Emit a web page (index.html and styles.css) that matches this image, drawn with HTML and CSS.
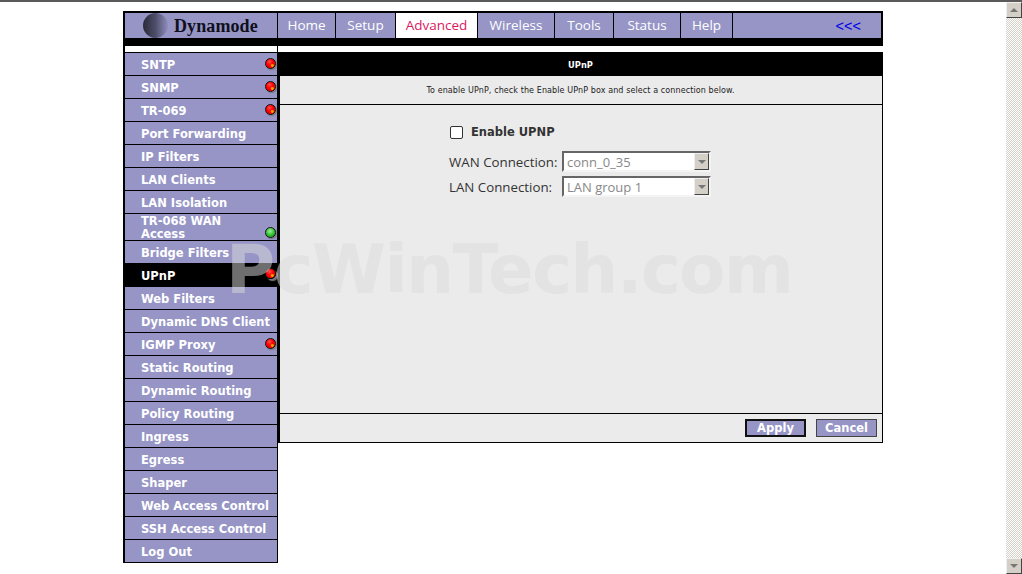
FILE: index.html
```html
<!DOCTYPE html>
<html lang="en">
<head>
<meta charset="utf-8">
<title>Dynamode - UPnP</title>
<link rel="stylesheet" href="styles.css">
</head>
<body>
<div class="screen">
  <div class="topline"></div>
  <div class="viewport">
    <div class="page">
      <div class="frame">
        <header class="head">
          <div class="brand">
            <svg class="globe" width="25" height="25" viewBox="0 0 25 25">
              <defs>
                <linearGradient id="g" x1="0" y1="0" x2="1" y2="0">
                  <stop offset="0" stop-color="#2a2a38"/>
                  <stop offset="0.5" stop-color="#4e4e6a"/>
                  <stop offset="1" stop-color="#8f8ebd"/>
                </linearGradient>
              </defs>
              <circle cx="12.5" cy="12.5" r="12.5" fill="url(#g)"/>
            </svg>
            <span class="brand-name">Dynamode</span>
          </div>
          <nav class="tabs">
            <a class="tab t-home">Home</a>
            <a class="tab t-setup">Setup</a>
            <a class="tab t-adv active">Advanced</a>
            <a class="tab t-wire">Wireless</a>
            <a class="tab t-tools">Tools</a>
            <a class="tab t-status">Status</a>
            <a class="tab t-help">Help</a>
            <div class="tab-rest"><a class="back">&lt;&lt;&lt;</a></div>
          </nav>
        </header>
        <div class="band"></div>
        <div class="body">
          <aside class="side">
            <div class="side-top"></div>
            <a class="item">SNTP<i class="dot red"></i></a>
            <a class="item">SNMP<i class="dot red"></i></a>
            <a class="item">TR-069<i class="dot red"></i></a>
            <a class="item">Port Forwarding</a>
            <a class="item">IP Filters</a>
            <a class="item">LAN Clients</a>
            <a class="item">LAN Isolation</a>
            <a class="item tall"><span class="wrap">TR-068 WAN<br>Access</span><i class="dot green low"></i></a>
            <a class="item">Bridge Filters</a>
            <a class="item current">UPnP<i class="dot red high"></i></a>
            <a class="item">Web Filters</a>
            <a class="item">Dynamic DNS Client</a>
            <a class="item">IGMP Proxy<i class="dot red"></i></a>
            <a class="item">Static Routing</a>
            <a class="item">Dynamic Routing</a>
            <a class="item">Policy Routing</a>
            <a class="item">Ingress</a>
            <a class="item">Egress</a>
            <a class="item">Shaper</a>
            <a class="item">Web Access Control</a>
            <a class="item">SSH Access Control</a>
            <a class="item">Log Out</a>
          </aside>
          <main class="content">
            <div class="whitebar"></div>
            <div class="panel">
              <h1 class="title">UPnP</h1>
              <p class="intro">To enable UPnP, check the Enable UPnP box and select a connection below.</p>
              <div class="form">
                <label class="enable"><span class="check"></span>Enable UPNP</label>
                <div class="field">
                  <span class="lbl">WAN Connection:</span>
                  <div class="select"><span>conn_0_35</span><b class="arrow"></b></div>
                </div>
                <div class="field">
                  <span class="lbl">LAN Connection:</span>
                  <div class="select"><span>LAN group 1</span><b class="arrow"></b></div>
                </div>
              </div>
              <div class="actions">
                <button class="btn primary">Apply</button>
                <button class="btn">Cancel</button>
              </div>
            </div>
          </main>
        </div>
      </div>
    </div>
    <div class="scrollbar">
      <div class="sb-btn"><b class="up"></b></div>
      <div class="sb-btn"><b class="down"></b></div>
    </div>
  </div>
  <div class="watermark">PcWinTech.com</div>
</div>
</body>
</html>
```
FILE: styles.css
```css
* { box-sizing: border-box; }
html, body { margin: 0; height: 100%; overflow: hidden; background: #fff; }
.screen { position: relative; width: 1022px; height: 574px; display: flex; flex-direction: column; font-family: "DejaVu Sans", sans-serif; }
.topline { height: 2px; background: #5a5a5a; flex: none; }
.viewport { flex: 1; display: flex; min-height: 0; }
.page { flex: 1; padding: 9px 0 0 123px; }
.frame { width: 760px; }

.head { display: flex; height: 27px; background: #000; padding: 2px 2px 0; }
.brand { width: 152px; height: 25px; background: #9695c6; display: flex; align-items: center; padding-left: 18px; gap: 6px; }
.globe { flex: none; }
.brand-name { font: bold 18px/25px "Liberation Serif", serif; color: #10101c; letter-spacing: .1px; padding-top: 1px; }
.tabs { flex: 1; display: flex; margin-left: 1px; gap: 1px; }
.tab { background: #9695c6; color: #fff; font: 13.5px/25px "Open Sans", sans-serif; display: flex; justify-content: center; height: 25px; }
.tab.active { background: #fff; color: #d81b60; }
.t-home { width: 57px; }
.t-setup { width: 59px; }
.t-adv { width: 81px; }
.t-wire { width: 76px; }
.t-tools { width: 58px; }
.t-status { width: 66px; }
.t-help { width: 51px; }
.tab-rest { flex: 1; background: #9695c6; display: flex; align-items: center; justify-content: flex-end; padding-right: 20px; }
.back { color: #0000e6; font: 14.5px "Liberation Sans", sans-serif; }

.band { height: 8px; background: #000; }
.body { display: flex; align-items: flex-start; }
.side { width: 155px; background: #000; padding: 0 0 0 2px; flex: none; border-bottom: 1px solid #000; }
.side-top { height: 6px; background: #fff; width: 152px; margin-bottom: 1px; }
.item { position: relative; display: flex; align-items: center; width: 152px; height: 22px; margin-bottom: 1px; padding: 1px 0 0 16px; background: #9695c6; color: #fff; font: bold 11.5px "DejaVu Sans", sans-serif; }
.item:last-child { margin-bottom: 0; }
.item.tall { height: 26px; line-height: 13px; }
.item.current { background: #000; }
.dot { position: absolute; right: 1px; top: 5px; width: 11px; height: 11px; border-radius: 50%; border: 1px solid #111; box-shadow: 1px 1px 1px #777; }
.dot.low { top: 13px; }
.dot.high { top: 4px; box-shadow: 2px 2px 1px #777; }
.dot.red { background: radial-gradient(circle at 70% 72%, #ffb000 0, #ff9000 12%, transparent 22%), radial-gradient(circle at 40% 30%, #ff5050, #ff0000 40%, #ee0000); }
.dot.green { background: radial-gradient(circle at 45% 35%, #9ef09e, #2cc02c 55%, #189018); }

.content { flex: 1; }
.whitebar { height: 6px; margin-right: 2px; background: #fff; }
.panel { position: relative; height: 391px; background: #ebebeb; border: 1px solid #000; border-top: 0; border-left-width: 2px; display: flex; flex-direction: column; }
.title { margin: 0 -1px 0 -2px; height: 24px; background: #000; color: #fff; font: bold 8.3px/26px "DejaVu Sans", sans-serif; text-align: center; }
.intro { margin: 0; height: 29px; border-bottom: 1px solid #000; font: 8px/29px "DejaVu Sans", sans-serif; letter-spacing: .1px; color: #222; text-align: center; padding-right: 1px; }
.form { flex: 1; padding: 20px 0 0 169px; color: #333; border-bottom: 1px solid #000; }
.enable { display: flex; align-items: center; font: bold 11.5px "DejaVu Sans", sans-serif; height: 14px; margin-bottom: 10px; color: #333; }
.check { width: 13px; height: 13px; border: 1px solid #333; border-radius: 2px; background: #fff; margin: 0 8px 0 1px; }
.field { display: flex; align-items: center; height: 25px; font: 13.3px "Open Sans", sans-serif; }
.lbl { width: 113px; }
.select { width: 149px; height: 21px; display: flex; align-items: center; justify-content: space-between; background: #fff; border: 2px solid; border-color: #666 #f4f4f4 #f4f4f4 #666; color: #888; padding: 0 0 0 3px; font-size: 13px; }
.arrow { width: 15px; height: 17px; background: #d4d0c8; border: 1px solid; border-color: #eee #444 #444 #eee; position: relative; }
.arrow::after { content: ""; position: absolute; left: 3px; top: 6px; border: 4px solid transparent; border-top: 4px solid #777; border-bottom: 0; }
.actions { height: 28px; display: flex; justify-content: flex-end; align-items: flex-start; gap: 10px; padding: 5px 5px 0 0; }
.btn { width: 61px; height: 18px; padding: 0; background: #9695c6; color: #fff; border: 1px solid #444; font: bold 11.5px/14px "DejaVu Sans", sans-serif; }
.btn.primary { border: 2px solid #111; }

.scrollbar { width: 16px; flex: none; display: flex; flex-direction: column; justify-content: space-between; background: repeating-conic-gradient(#d4d0c8 0 25%, #fff 0 50%) 0 0 / 2px 2px; }
.sb-btn { height: 16px; background: #d4d0c8; border: 1px solid; border-color: #f0f0f0 #444 #444 #f0f0f0; display: flex; align-items: center; justify-content: center; }
.up, .down { width: 0; height: 0; border: 4px solid transparent; }
.up { border-bottom-color: #777; border-top: 0; }
.down { border-top-color: #777; border-bottom: 0; }

.watermark { position: absolute; left: 226px; top: 235px; font: bold 67px/70px "DejaVu Sans", sans-serif; letter-spacing: -1.35px; color: rgba(220,220,220,.5); white-space: nowrap; pointer-events: none; }
```
